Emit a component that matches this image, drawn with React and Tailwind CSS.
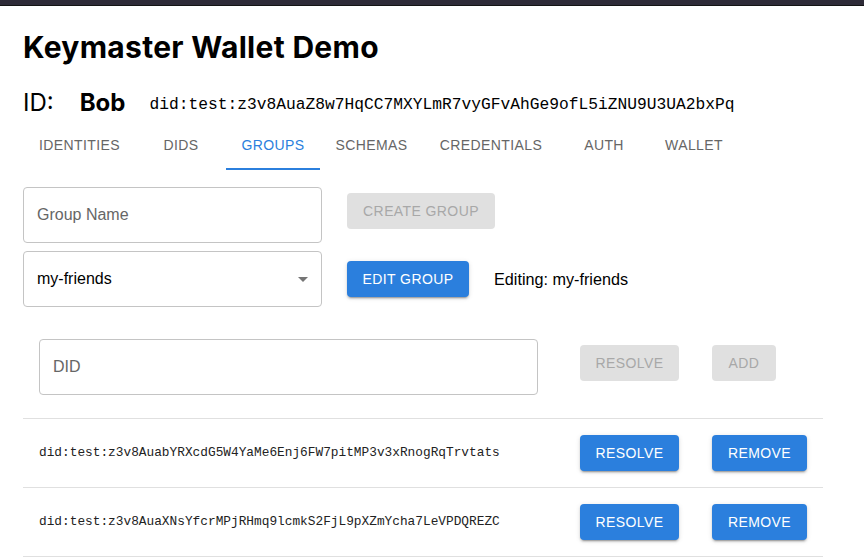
import React from 'react';

const tabs = [
  { label: 'Identities', w: 'w-[113px]' },
  { label: 'DIDs', w: 'w-[90px]' },
  { label: 'Groups', w: 'w-[94px]', active: true },
  { label: 'Schemas', w: 'w-[103px]' },
  { label: 'Credentials', w: 'w-[136px]' },
  { label: 'Auth', w: 'w-[90px]' },
  { label: 'Wallet', w: 'w-[90px]' },
];

const members = [
  'did:test:z3v8AuabYRXcdG5W4YaMe6Enj6FW7pitMP3v3xRnogRqTrvtats',
  'did:test:z3v8AuaXNsYfcrMPjRHmq9lcmkS2FjL9pXZmYcha7LeVPDQREZC',
];

const Btn = ({ children, disabled, className = '' }) => (
  <button
    className={`h-[36px] rounded-[4px] text-[14px] uppercase tracking-[0.4px] leading-none flex items-center justify-center ${
      disabled
        ? 'bg-[#e0e0e0] text-[#a8a8a8]'
        : 'bg-[#2b7fdd] text-white shadow-[0_3px_1px_-2px_rgba(0,0,0,0.2),0_2px_2px_0_rgba(0,0,0,0.14),0_1px_5px_0_rgba(0,0,0,0.12)]'
    } ${className}`}
  >
    {children}
  </button>
);

export default function App() {
  return (
    <div className="w-[864px] h-[558px] overflow-hidden bg-white font-['Liberation_Sans',Arial,sans-serif] text-black">
      {/* window chrome strip */}
      <div className="h-[6px] bg-[#2e2b38] border-b border-[#141414]" />

      <div className="px-[23px]">
        <h1 className="mt-[26px] font-['Inter',sans-serif] font-bold text-[30px] tracking-[0.3px] leading-none">
          Keymaster Wallet Demo
        </h1>

        {/* current id */}
        <div className="mt-[29px] h-[24px] flex items-center">
          <span className="font-['Inter',sans-serif] text-[24px] leading-none">ID:</span>
          <span className="ml-[26px] font-['Inter',sans-serif] font-bold text-[24px] leading-none">Bob</span>
          <span className="ml-[24px] pt-[4px] font-['Liberation_Mono',monospace] text-[16.25px] leading-none">
            did:test:z3v8AuaZ8w7HqCC7MXYLmR7vyGFvAhGe9ofL5iZNU9U3UA2bxPq
          </span>
        </div>

        {/* tabs */}
        <div className="mt-[7px] flex h-[48px]">
          {tabs.map((t) => (
            <div
              key={t.label}
              className={`${t.w} h-[48px] pb-[2px] flex items-center justify-center text-[14px] uppercase tracking-[0.4px] leading-none ${
                t.active ? 'text-[#2b7fdd] shadow-[inset_0_-2px_0_#2b7fdd]' : 'text-[#666666]'
              }`}
            >
              {t.label}
            </div>
          ))}
        </div>

        {/* group form */}
        <div className="mt-[17px] flex flex-col gap-[8px]">
          <div className="flex items-start">
            <div className="w-[299px] h-[56px] border border-[#c4c4c4] rounded-[4px] flex items-center px-[13px] text-[16px] text-[#666666]">
              Group Name
            </div>
            <Btn disabled className="ml-[25px] mt-[6px] w-[148px]">Create Group</Btn>
          </div>
          <div className="flex items-center">
            <div className="w-[299px] h-[56px] border border-[#c4c4c4] rounded-[4px] flex items-center justify-between pl-[13px] pr-[6px] text-[16px]">
              <span>my-friends</span>
              <svg viewBox="0 0 24 24" className="w-[24px] h-[24px] fill-[#757575]">
                <path d="M7 10l5 5 5-5z" />
              </svg>
            </div>
            <Btn className="ml-[25px] w-[122px]">Edit Group</Btn>
            <span className="ml-[25px] text-[16.2px]">Editing: my-friends</span>
          </div>
        </div>

        {/* members table */}
        <div className="mt-[16px] w-[800px]">
          <div className="h-[96px] flex items-start border-b border-[#e0e0e0]">
            <div className="w-[541px] pl-4 pt-4">
              <div className="w-[499px] h-[56px] border border-[#c4c4c4] rounded-[4px] flex items-center px-[13px] text-[16px] text-[#666666]">
                DID
              </div>
            </div>
            <div className="w-[132px] pl-4 pt-[22px]">
              <Btn disabled className="w-[99px]">Resolve</Btn>
            </div>
            <div className="pl-4 pt-[22px]">
              <Btn disabled className="w-[64px]">Add</Btn>
            </div>
          </div>

          {members.map((did) => (
            <div key={did} className="h-[69px] flex items-center border-b border-[#e0e0e0]">
              <div className="w-[541px] pl-4 font-['Liberation_Mono',monospace] text-[12.8px] text-[#222222]">
                {did}
              </div>
              <div className="w-[132px] pl-4">
                <Btn className="w-[99px]">Resolve</Btn>
              </div>
              <div className="pl-4">
                <Btn className="w-[95px]">Remove</Btn>
              </div>
            </div>
          ))}
        </div>
      </div>
    </div>
  );
}
